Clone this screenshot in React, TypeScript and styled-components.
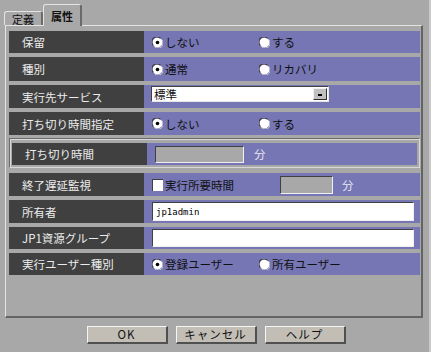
import React from 'react'
import styled, { createGlobalStyle } from 'styled-components'

const Global = createGlobalStyle`
body {
    margin: 0;
    background: #a8a8a8;
    font-family: "Noto Sans CJK JP", "Liberation Sans", sans-serif;
}
`

const Window = styled.div`
width: 431px;
height: 352px;
box-sizing: border-box;
padding: 4px 6px 0 5px;
background: #a8a8a8;
border-right: 2px solid #c8c8c8;
`

const TabBar = styled.div`
display: flex;
align-items: flex-end;
height: 21px;
`

const Tab = styled.div<{ $active?: boolean }>`
box-sizing: border-box;
height: ${p => p.$active ? 22 : 14}px;
margin-left: ${p => p.$active ? 0 : -1}px;
padding: 0 7px;
display: flex;
align-items: center;
font-size: 11px;
font-weight: ${p => p.$active ? 700 : 400};
color: #101010;
background: #a8a8a8;
border-top: 1px solid #e4e4e4;
border-left: 1px solid #e4e4e4;
border-right: 2px solid #6a6a6a;
border-radius: 3px 3px 0 0;
position: relative;
margin-bottom: ${p => p.$active ? -1 : 0}px;
z-index: ${p => p.$active ? 2 : 1};
`

const Panel = styled.div`
box-sizing: border-box;
height: 293px;
border-top: 1px solid #e4e4e4;
border-left: 1px solid #e4e4e4;
border-right: 2px solid #646464;
border-bottom: 2px solid #646464;
padding: 5px 1px 0 3px;
display: flex;
flex-direction: column;
`

const Row = styled.div<{ $h: number; $mt: number }>`
display: grid;
grid-template-columns: 135px 1fr;
height: ${p => p.$h}px;
margin-top: ${p => p.$mt}px;
`

const Label = styled.div`
background: #404040;
color: #ececec;
font-size: 11.5px;
display: flex;
align-items: center;
padding-left: 13px;
white-space: nowrap;
`

const Value = styled.div<{ $top?: boolean }>`
background: #7676b4;
display: flex;
align-items: ${p => p.$top ? 'flex-start' : 'center'};
padding: ${p => p.$top ? '1px 0 0 7px' : '0 0 0 8px'};
font-size: 11.5px;
color: #101010;
`

const Groove = styled.div`
margin-top: 3px;
height: 30px;
box-sizing: border-box;
border: 1px solid #6a6a6a;
border-right-color: #d8d8d8;
border-bottom-color: #d8d8d8;
box-shadow: inset 1px 1px 0 #d8d8d8;
padding: 4px 2px 0 2px;
`

const Option = styled.label`
display: flex;
align-items: center;
width: 107px;
gap: 2px;
white-space: nowrap;
`

const Select = styled.div`
width: 178px;
height: 16px;
box-sizing: border-box;
background: #fff;
border-top: 1px solid #404040;
border-left: 1px solid #404040;
border-bottom: 1px solid #e8e8e8;
border-right: 1px solid #e8e8e8;
display: flex;
align-items: center;
justify-content: space-between;
padding-left: 2px;
font-size: 11.5px;
`

const DropButton = styled.div`
width: 14px;
height: 12px;
box-sizing: border-box;
background: #c0c0c0;
border-top: 1px solid #f0f0f0;
border-left: 1px solid #f0f0f0;
border-right: 1px solid #303030;
border-bottom: 1px solid #303030;
display: flex;
align-items: center;
justify-content: center;
margin-right: 1px;
&::after {
    content: '';
    width: 4px;
    height: 2px;
    margin-top: 2px;
    background: #000;
}
`

const Field = styled.div<{ $w: number; $h: number; $white?: boolean; $ml?: number }>`
width: ${p => p.$w}px;
height: ${p => p.$h}px;
margin-left: ${p => p.$ml ?? 0}px;
box-sizing: border-box;
background: ${p => p.$white ? '#fff' : '#a8a8a8'};
border-top: 1px solid #404040;
border-left: 1px solid #404040;
border-bottom: 1px solid #f0f0f0;
border-right: 1px solid #f0f0f0;
display: flex;
align-items: center;
padding-left: 3px;
font-family: "DejaVu Sans Mono", monospace;
font-size: 9px;
color: #000;
`

const Unit = styled.span<{ $ml: number }>`
margin-left: ${p => p.$ml}px;
color: #e8e8f0;
`

const Check = styled.span`
width: 11px;
height: 12px;
box-sizing: border-box;
background: #fff;
border-top: 1px solid #404040;
border-left: 1px solid #404040;
margin-right: 2px;
`

const Buttons = styled.div`
display: flex;
justify-content: center;
gap: 8px;
margin-top: 8px;
padding-left: 4px;
`

const Button = styled.button`
width: 81px;
height: 18px;
box-sizing: border-box;
background: #c2beb6;
border: none;
border-top: 1px solid #f4f4f4;
border-left: 1px solid #f4f4f4;
border-right: 2px solid #505050;
border-bottom: 2px solid #505050;
font-family: "Noto Sans CJK JP", "Liberation Sans", sans-serif;
font-size: 11.5px;
color: #101010;
padding: 0;
line-height: 1;
letter-spacing: 1px;
`

function Radio({ checked }: { checked?: boolean }) {
    return <svg width="11" height="11" viewBox="0 0 11 11">
        <circle cx="5.5" cy="5.5" r="5" fill="#fff" />
        <path d="M1.3 8.5 A5 5 0 0 1 8.5 1.3" fill="none" stroke="#404040" strokeWidth="1.2" />
        <path d="M2.5 9.7 A5 5 0 0 0 9.7 2.5" fill="none" stroke="#c8c8c8" strokeWidth="1" />
        {checked && <circle cx="5.5" cy="5.5" r="1.8" fill="#000" />}
    </svg>
}

function RadioPair({ a, b }: { a: string; b: string }) {
    return <>
        <Option><Radio checked />{a}</Option>
        <Option><Radio />{b}</Option>
    </>
}

export default function App() {
    return <Window>
        <Global />
        <TabBar>
            <Tab>定義</Tab>
            <Tab $active>属性</Tab>
        </TabBar>
        <Panel>
            <Row $h={22} $mt={0}>
                <Label>保留</Label>
                <Value><RadioPair a='しない' b='する' /></Value>
            </Row>
            <Row $h={24} $mt={4}>
                <Label>種別</Label>
                <Value><RadioPair a='通常' b='リカバリ' /></Value>
            </Row>
            <Row $h={23} $mt={4}>
                <Label>実行先サービス</Label>
                <Value $top>
                    <Select>標準<DropButton /></Select>
                </Value>
            </Row>
            <Row $h={23} $mt={4}>
                <Label>打ち切り時間指定</Label>
                <Value><RadioPair a='しない' b='する' /></Value>
            </Row>
            <Groove>
                <Row $h={22} $mt={0}>
                    <Label>打ち切り時間</Label>
                    <Value>
                        <Field $w={89} $h={17} />
                        <Unit $ml={10}>分</Unit>
                    </Value>
                </Row>
            </Groove>
            <Row $h={23} $mt={5}>
                <Label>終了遅延監視</Label>
                <Value>
                    <Check />実行所要時間
                    <Field $w={53} $h={18} $ml={46} />
                    <Unit $ml={9}>分</Unit>
                </Value>
            </Row>
            <Row $h={23} $mt={4}>
                <Label>所有者</Label>
                <Value>
                    <Field $w={262} $h={19} $white>jp1admin</Field>
                </Value>
            </Row>
            <Row $h={22} $mt={4}>
                <Label>JP1資源グループ</Label>
                <Value>
                    <Field $w={262} $h={18} $white />
                </Value>
            </Row>
            <Row $h={22} $mt={4}>
                <Label>実行ユーザー種別</Label>
                <Value><RadioPair a='登録ユーザー' b='所有ユーザー' /></Value>
            </Row>
        </Panel>
        <Buttons>
            <Button>OK</Button>
            <Button>キャンセル</Button>
            <Button>ヘルプ</Button>
        </Buttons>
    </Window>
}
